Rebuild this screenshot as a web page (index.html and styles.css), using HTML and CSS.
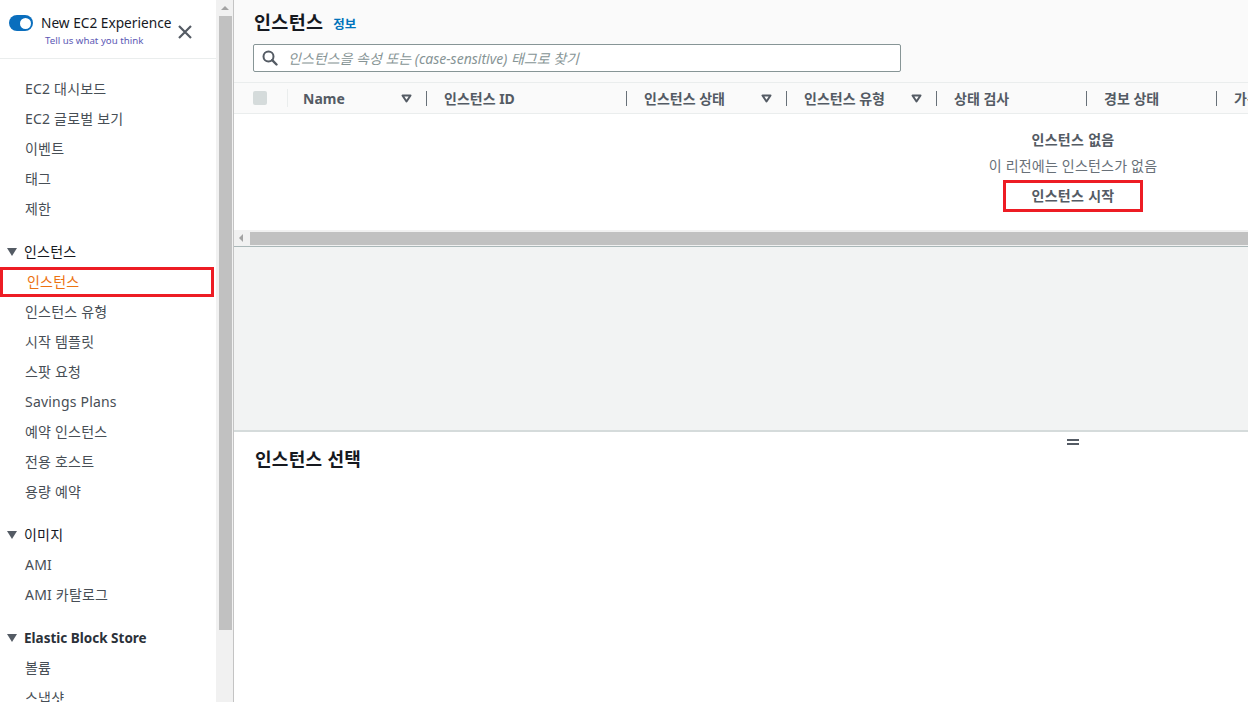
FILE: index.html
```html
<!DOCTYPE html>
<html lang="ko">
<head>
<meta charset="utf-8">
<title>인스턴스 | EC2</title>
<link rel="stylesheet" href="styles.css">
</head>
<body>
<div class="app">
  <aside class="sidebar">
    <div class="side-head">
      <span class="toggle"><span class="knob"></span></span>
      <div class="exp">
        <div class="exp-title">New EC2 Experience</div>
        <div class="exp-link">Tell us what you think</div>
      </div>
      <svg class="close" width="14" height="14" viewBox="0 0 14 14"><path d="M1 1L13 13M13 1L1 13" stroke="#545b64" stroke-width="2.2" fill="none"/></svg>
    </div>
    <nav class="nav">
      <div class="item">EC2 대시보드</div>
      <div class="item">EC2 글로벌 보기</div>
      <div class="item">이벤트</div>
      <div class="item">태그</div>
      <div class="item">제한</div>
      <div class="section"><span class="caret"></span>인스턴스</div>
      <div class="item active">인스턴스</div>
      <div class="item">인스턴스 유형</div>
      <div class="item">시작 템플릿</div>
      <div class="item">스팟 요청</div>
      <div class="item">Savings Plans</div>
      <div class="item">예약 인스턴스</div>
      <div class="item">전용 호스트</div>
      <div class="item">용량 예약</div>
      <div class="section"><span class="caret"></span>이미지</div>
      <div class="item">AMI</div>
      <div class="item">AMI 카탈로그</div>
      <div class="section latin"><span class="caret"></span>Elastic Block Store</div>
      <div class="item">볼륨</div>
      <div class="item">스냅샷</div>
    </nav>
  </aside>
  <div class="vscroll">
    <span class="arrow-up"></span>
    <div class="vthumb"></div>
  </div>
  <main class="main">
    <header class="page-head">
      <div class="title-row">
        <h1 class="title">인스턴스</h1>
        <span class="info">정보</span>
      </div>
      <div class="search">
        <svg class="search-icon" width="16" height="16" viewBox="0 0 16 16"><circle cx="6.5" cy="6.5" r="5" stroke="#545b64" stroke-width="2" fill="none"/><path d="M10.2 10.2L14.5 14.5" stroke="#545b64" stroke-width="2.4" stroke-linecap="round"/></svg>
        <span class="placeholder">인스턴스을 속성 또는 (case-sensitive) 태그로 찾기</span>
      </div>
    </header>
    <div class="table">
      <div class="thead">
        <div class="cell c-check"><span class="checkbox"></span></div>
        <span class="sep"></span>
        <div class="cell c-name"><span>Name</span><svg class="sort" width="11" height="9" viewBox="0 0 11 9"><path d="M1.5 1.5H9.5L5.5 7.5Z" stroke="#545b64" stroke-width="2" fill="none" stroke-linejoin="round"/></svg></div>
        <span class="sep"></span>
        <div class="cell c-id"><span>인스턴스 ID</span></div>
        <span class="sep"></span>
        <div class="cell c-state"><span>인스턴스 상태</span><svg class="sort" width="11" height="9" viewBox="0 0 11 9"><path d="M1.5 1.5H9.5L5.5 7.5Z" stroke="#545b64" stroke-width="2" fill="none" stroke-linejoin="round"/></svg></div>
        <span class="sep"></span>
        <div class="cell c-type"><span>인스턴스 유형</span><svg class="sort" width="11" height="9" viewBox="0 0 11 9"><path d="M1.5 1.5H9.5L5.5 7.5Z" stroke="#545b64" stroke-width="2" fill="none" stroke-linejoin="round"/></svg></div>
        <span class="sep"></span>
        <div class="cell c-check2"><span>상태 검사</span></div>
        <span class="sep"></span>
        <div class="cell c-alarm"><span>경보 상태</span></div>
        <span class="sep"></span>
        <div class="cell c-az"><span>가용 영역</span></div>
      </div>
      <div class="tbody">
        <div class="empty-title">인스턴스 없음</div>
        <div class="empty-text">이 리전에는 인스턴스가 없음</div>
        <div class="launch">인스턴스 시작</div>
      </div>
      <div class="hscroll">
        <span class="arrow-left"></span>
        <div class="hthumb"></div>
      </div>
    </div>
    <div class="gray-area"></div>
    <section class="detail">
      <div class="handle"><span></span><span></span></div>
      <h2 class="detail-title">인스턴스 선택</h2>
    </section>
  </main>
</div>
</body>
</html>
```
FILE: styles.css
```css
* { box-sizing: border-box; }
html, body { margin: 0; padding: 0; }
body {
  width: 1248px;
  height: 702px;
  overflow: hidden;
  font-family: "Noto Sans", "Noto Sans CJK KR", sans-serif;
  font-size: 14px;
  color: #16191f;
  background: #fff;
}
.app { display: flex; height: 702px; }

/* sidebar */
.sidebar { width: 216px; flex: none; background: #fff; overflow: hidden; }
.side-head {
  height: 59px;
  border-bottom: 1px solid #eaeded;
  display: flex;
  align-items: flex-start;
  padding: 14px 24px 0 9px;
}
.toggle {
  width: 24px; height: 16px; margin-top: 1px;
  border-radius: 8px; background: #0a6ebd;
  display: flex; align-items: center; justify-content: flex-end;
  padding-right: 2px; flex: none;
}
.knob { width: 11px; height: 11px; border-radius: 50%; background: #fff; }
.exp { margin-left: 8px; }
.exp-title { font-size: 13.7px; line-height: 18px; color: #16191f; }
.exp-link { font-size: 9.7px; line-height: 15px; margin-top: 1px; color: #5c58b5; padding-left: 4px; }
.close { margin-left: auto; margin-top: 11px; flex: none; }

.nav { padding-top: 15px; }
.item {
  height: 30px; line-height: 30px;
  padding-left: 25px;
  color: #474e55;
  font-size: 14px;
  letter-spacing: 0.2px;
  white-space: nowrap;
}
.item.active {
  width: 214px;
  color: #ec7211;
  padding-left: 27px;
  outline: 3px solid #ed1c24;
  outline-offset: -3px;
}
.section {
  margin-top: 13px;
  height: 30px; line-height: 30px;
  padding-left: 7px;
  display: flex; align-items: center;
  color: #16191f; font-size: 14px;
  letter-spacing: 0.2px;
  white-space: nowrap;
}
.section.latin { font-weight: 700; color: #2b3139; font-size: 13.5px; letter-spacing: 0; }
.caret {
  width: 0; height: 0;
  border-left: 5.5px solid transparent;
  border-right: 5.5px solid transparent;
  border-top: 8px solid #545b64;
  margin-right: 7px;
}

/* sidebar scrollbar */
.vscroll {
  width: 18px; flex: none;
  background: #f1f1f1;
  border-right: 1px solid #c4c4c4;
  display: flex; flex-direction: column; align-items: center;
  padding-left: 2px; padding-right: 1px;
}
.arrow-up {
  margin-top: 6px;
  width: 0; height: 0;
  border-left: 4px solid transparent;
  border-right: 4px solid transparent;
  border-bottom: 4px solid #a3a3a3;
}
.vthumb { margin-top: 6px; width: 13px; height: 614px; background: #c1c1c1; }

/* main */
.main { width: 1014px; flex: none; overflow: hidden; display: flex; flex-direction: column; }
.page-head { height: 82px; flex: none; background: #fafafa; padding: 10px 0 0 19px; }
.title-row { display: flex; align-items: baseline; height: 24px; }
.title { margin: 0; font-size: 18.5px; line-height: 24px; font-weight: 700; color: #16191f; padding-left: 1px; letter-spacing: 0.3px; }
.info { margin-left: 10px; font-size: 12.5px; color: #0073bb; font-weight: 700; }
.search {
  margin-top: 10px;
  width: 648px; height: 28px;
  border: 1px solid #879596;
  border-radius: 2px;
  background: #fff;
  display: flex; align-items: center;
  padding-left: 8px;
}
.search-icon { flex: none; }
.placeholder { margin-left: 10px; font-style: italic; color: #879596; font-size: 14px; white-space: nowrap; }

.table { width: 1678px; flex: none; }
.thead {
  height: 32px;
  background: #fafafa;
  border-top: 1px solid #eaeded;
  border-bottom: 1px solid #eaeded;
  display: flex; align-items: center;
}
.cell {
  height: 30px;
  display: flex; align-items: center; justify-content: space-between;
  padding: 0 14px 0 17px;
  font-weight: 700; color: #545b64; font-size: 14px;
  white-space: nowrap; flex: none;
}
.c-check { width: 53px; padding-left: 19px; }
.c-name { width: 138px; padding-left: 15px; }
.c-id { width: 199px; }
.c-state { width: 159px; }
.c-type { width: 149px; }
.c-check2 { width: 149px; }
.c-alarm { width: 129px; }
.c-az { width: 200px; }
.checkbox { width: 14px; height: 14px; border-radius: 2px; background: #d5dbdb; }
.sep { width: 1px; height: 15px; background: #687078; flex: none; }
.c-check + .sep { background: #eaeded; height: 18px; }
.sort { flex: none; }

.tbody {
  height: 116px;
  display: flex; flex-direction: column; align-items: center;
  padding-top: 16px;
  background: #fff;
}
.empty-title { font-weight: 700; color: #545b64; line-height: 20px; letter-spacing: 0.3px; }
.empty-text { margin-top: 6px; color: #687078; line-height: 20px; letter-spacing: 0.2px; }
.launch {
  margin-top: 4px;
  height: 32px; line-height: 26px;
  border: 3px solid #ed1c24;
  padding: 0 25px;
  font-weight: 700; color: #545b64;
  letter-spacing: 0.3px;
}
.hscroll {
  height: 17px;
  background: #f1f1f1;
  border-bottom: 1px solid #aab7b8;
  display: flex; align-items: flex-start;
  padding-left: 5px;
}
.arrow-left {
  margin-top: 4px;
  width: 0; height: 0;
  border-top: 4px solid transparent;
  border-bottom: 4px solid transparent;
  border-right: 4px solid #a3a3a3;
}
.hthumb { margin-left: 7px; height: 13px; flex: 1; background: #c1c1c1; margin-top: 2px; }

.gray-area { height: 185px; background: #f2f3f3; border-bottom: 2px solid #d5dbdb; flex: none; }
.detail { width: 1678px; flex: 1; background: #fff; padding-top: 7px; }
.handle { display: flex; flex-direction: column; align-items: center; gap: 2px; }
.handle span { width: 12px; height: 2px; background: #545b64; }
.detail-title { margin: 2px 0 0 0; padding-left: 21px; font-size: 18px; line-height: 24px; font-weight: 700; color: #16191f; letter-spacing: 0.3px; }
```
